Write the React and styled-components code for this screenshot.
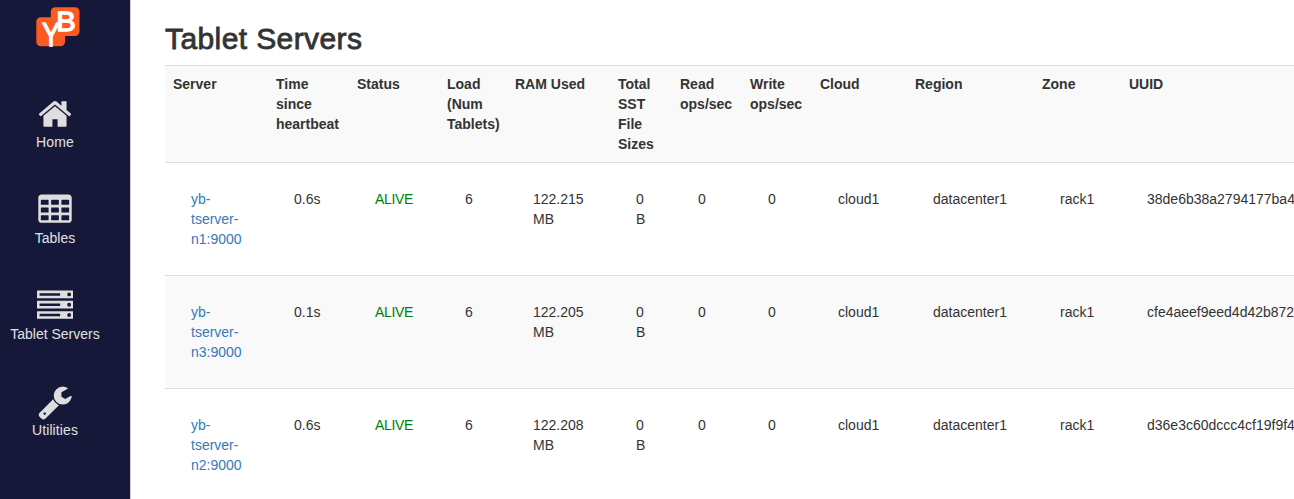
import React from "react";
import styled, { createGlobalStyle } from "styled-components";

const GlobalStyle = createGlobalStyle`
  *, *::before, *::after { box-sizing: border-box; }
  html, body { margin: 0; height: 100%; overflow: hidden; }
  body {
    background: #fff;
    color: #333;
    font-family: "Helvetica Neue", "Liberation Sans", Helvetica, Arial, sans-serif;
    font-size: 14px;
    line-height: 20px;
  }
`;

const Page = styled.div`
  display: flex;
  height: 100vh;
  overflow: hidden;
`;

const Sidebar = styled.nav`
  flex: 0 0 131px;
  display: flex;
  flex-direction: column;
  padding-right: 20px;
  background: #151838;
  border-right: 1px solid #cdcdda;
`;

const LogoLink = styled.a`
  display: flex;
  justify-content: center;
  height: 96px;
  padding: 7px 0 0 5px;
`;

const NavList = styled.ul`
  display: flex;
  flex-direction: column;
  gap: 40px;
  margin: 0;
  padding: 0;
  list-style: none;
`;

const NavItem = styled.li`
  display: flex;
  flex-direction: column;
  align-items: center;
  color: #e1e1e3;
  white-space: nowrap;
`;

const NavIcon = styled.svg`
  display: block;
  width: 36px;
  height: 36px;
  fill: #dedede;
`;

const NavLabel = styled.span`
  letter-spacing: ${(p) => p.$tracking || "0"};
`;

const Main = styled.main`
  flex: 1;
  min-width: 0;
  padding: 22px 0 0 34px;
  overflow: hidden;
`;

const Title = styled.h2`
  margin: 0 0 10px;
  font-size: 30px;
  font-weight: 500;
  line-height: 33px;
  letter-spacing: 0.4px;
  -webkit-text-stroke: 0.8px #333;
`;

const Table = styled.table`
  width: 1329px;
  table-layout: fixed;
  border-collapse: separate;
  border-spacing: 0;
`;

const Col = styled.col`
  width: ${(p) => p.$width}px;
`;

const Row = styled.tr`
  background: ${(p) => (p.$striped ? "#f9f9f9" : "#fff")};
`;

const HeadCell = styled.th`
  padding: 8px;
  border-top: 1px solid #ddd;
  text-align: left;
  vertical-align: top;
  font-weight: 700;
`;

const Cell = styled.td`
  padding: 26px;
  border-top: 1px solid #ddd;
  vertical-align: top;
  color: ${(p) => (p.$alive ? "#008000" : "inherit")};
  letter-spacing: ${(p) => (p.$alive ? "-0.35px" : "normal")};
`;

const ServerLink = styled.a`
  color: #337ab7;
  text-decoration: none;
`;

const LogoText = styled.text`
  fill: #fff;
  font-family: "Liberation Sans", Arial, sans-serif;
  stroke: #fff;
  stroke-width: 1.3px;
`;

const Logo = () => (
  <svg width="44" height="40" viewBox="0 0 44 40">
    <rect x="0.3" y="10.3" width="28.7" height="29" rx="4.5" fill="#fc5a21" />
    <rect x="14.8" y="0.3" width="28.7" height="28.8" rx="4.5" fill="#fc5a21" />
    <LogoText x="6" y="38.6" fontSize="33" textLength="18" lengthAdjust="spacingAndGlyphs">Y</LogoText>
    <LogoText x="20.3" y="24" fontSize="27.5" textLength="19.5" lengthAdjust="spacingAndGlyphs">B</LogoText>
  </svg>
);

const icons = {
  home: "M1472 992v480q0 26-19 45t-45 19h-384v-384h-256v384h-384q-26 0-45-19t-19-45v-480q0-1 .5-3t.5-3l575-474 575 474q1 2 1 6zm223-69l-62 74q-8 9-21 11h-3q-13 0-21-7l-692-577-692 577q-12 8-24 7-13-2-21-11l-62-74q-8-10-7-23.5t11-21.5l719-599q32-26 76-26t76 26l244 204v-195q0-14 9-23t23-9h192q14 0 23 9t9 23v408l219 182q10 8 11 21.5t-7 23.5z",
  table:
    "M224 128h1344q66 0 113 47t47 113v1088q0 66-47 113t-113 47h-1344q-66 0-113-47t-47-113v-1088q0-66 47-113t113-47z" +
    [384, 768, 1152]
      .flatMap((y) => [192, 704, 1216].map((x) => `M${x} ${y + 32}v192q0 32 32 32h320q32 0 32-32v-192q0-32-32-32h-320q-32 0-32 32z`))
      .join(""),
  server: [128, 640, 1152]
    .map((y) => `M0 ${y}h1792v384h-1792zM128 ${y + 128}v128h1024v-128zM1504 ${y + 192}a96 96 0 1 0 192 0a96 96 0 1 0-192 0z`)
    .join(""),
  wrench:
    "M448 1472q0-26-19-45t-45-19-45 19-19 45 19 45 45 19 45-19 19-45zm644-420l-682 682q-37 37-90 37-52 0-91-37l-106-108q-38-36-38-90 0-53 38-91l681-681q39 98 114.5 173.5t173.5 114.5zm634-435q0 39-23 106-47 134-164.5 217.5t-258.5 83.5q-185 0-316.5-131.5t-131.5-316.5 131.5-316.5 316.5-131.5q58 0 121.5 16.5t107.5 46.5q16 11 16 28t-16 28l-293 169v224l193 107q5-3 79-48.5t135.5-81 70.5-35.5q15 0 23.5 10t8.5 25z",
};

const navigation = [
  { icon: "home", label: "Home", tracking: "0.2px" },
  { icon: "table", label: "Tables" },
  { icon: "server", label: "Tablet Servers" },
  { icon: "wrench", label: "Utilities", tracking: "0.1px" },
];

const columns = [
  ["Server", 103],
  ["Time since heartbeat", 81],
  ["Status", 90],
  ["Load (Num Tablets)", 68],
  ["RAM Used", 103],
  ["Total SST File Sizes", 62],
  ["Read ops/sec", 70],
  ["Write ops/sec", 70],
  ["Cloud", 95],
  ["Region", 127],
  ["Zone", 87],
  ["UUID", 373],
];

const servers = [
  { name: "yb-tserver-n1:9000", heartbeat: "0.6s", ram: "122.215 MB", uuid: "38de6b38a2794177ba4" },
  { name: "yb-tserver-n3:9000", heartbeat: "0.1s", ram: "122.205 MB", uuid: "cfe4aeef9eed4d42b872" },
  { name: "yb-tserver-n2:9000", heartbeat: "0.6s", ram: "122.208 MB", uuid: "d36e3c60dccc4cf19f9f4" },
];

export default function App() {
  return (
    <>
      <GlobalStyle />
      <Page>
        <Sidebar>
          <LogoLink>
            <Logo />
          </LogoLink>
          <NavList>
            {navigation.map(({ icon, label, tracking }) => (
              <NavItem key={label}>
                <NavIcon viewBox="0 0 1792 1792">
                  <path fillRule="evenodd" d={icons[icon]} />
                </NavIcon>
                <NavLabel $tracking={tracking}>{label}</NavLabel>
              </NavItem>
            ))}
          </NavList>
        </Sidebar>
        <Main>
          <Title>Tablet Servers</Title>
          <Table>
            <colgroup>
              {columns.map(([name, width]) => (
                <Col key={name} $width={width} />
              ))}
            </colgroup>
            <tbody>
              <Row $striped>
                {columns.map(([name]) => (
                  <HeadCell key={name}>{name}</HeadCell>
                ))}
              </Row>
              {servers.map((s, i) => (
                <Row key={s.name} $striped={i % 2 === 1}>
                  <Cell>
                    <ServerLink>{s.name}</ServerLink>
                  </Cell>
                  <Cell>{s.heartbeat}</Cell>
                  <Cell $alive>ALIVE</Cell>
                  <Cell>6</Cell>
                  <Cell>{s.ram}</Cell>
                  <Cell>0 B</Cell>
                  <Cell>0</Cell>
                  <Cell>0</Cell>
                  <Cell>cloud1</Cell>
                  <Cell>datacenter1</Cell>
                  <Cell>rack1</Cell>
                  <Cell>{s.uuid}</Cell>
                </Row>
              ))}
            </tbody>
          </Table>
        </Main>
      </Page>
    </>
  );
}
